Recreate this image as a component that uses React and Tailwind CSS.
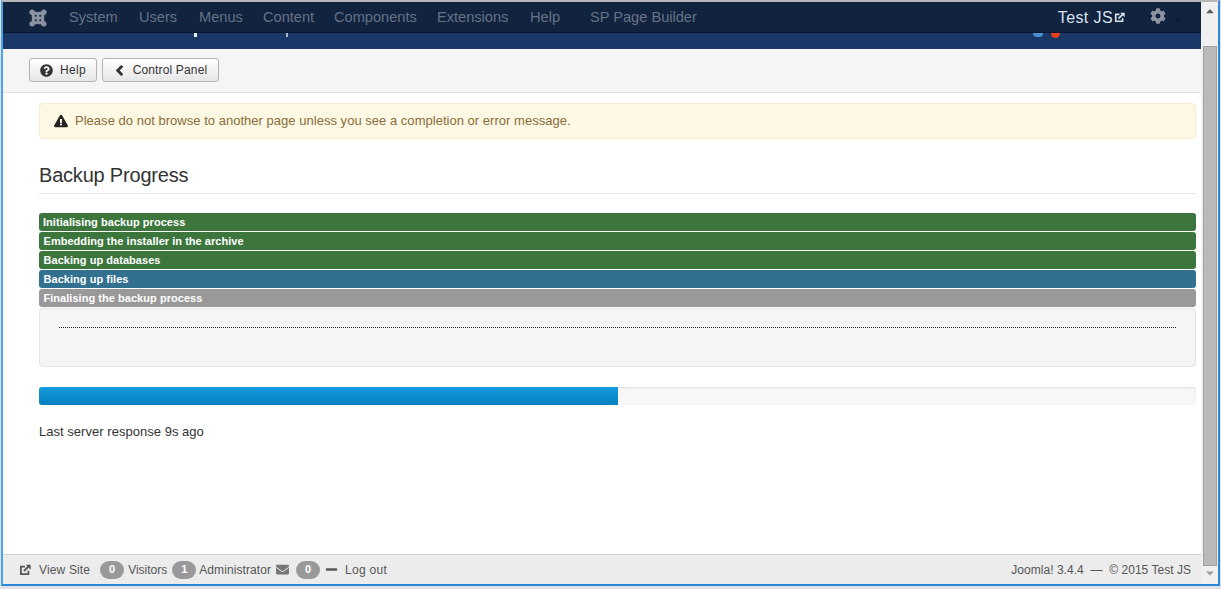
import React from "react";
import { FaQuestionCircle, FaChevronLeft, FaExclamationTriangle, FaCog, FaEnvelope, FaMinus, FaCaretUp, FaCaretDown } from "react-icons/fa";

function Ext({ className }) {
  return (
    <svg viewBox="0 0 16 16" className={className} fill="none" stroke="currentColor">
      <path d="M12.5 9v4.5h-10v-10H8" strokeWidth="2.4" />
      <path d="M6.5 9.5L14 2" strokeWidth="2.6" />
      <path d="M9 1h6.5v6.5z" fill="currentColor" stroke="none" />
    </svg>
  );
}

function JoomlaMark({ className }) {
  return (
    <svg viewBox="0 0 20 20" className={className}>
      <g fill="#8b93a0">
        <rect x="3" y="3" width="14" height="14" />
        <circle cx="3.5" cy="3.5" r="3" />
        <circle cx="16.5" cy="3.5" r="3" />
        <circle cx="3.5" cy="16.5" r="3" />
        <circle cx="16.5" cy="16.5" r="3" />
      </g>
      <g fill="#11233f">
        <path d="M7 0h6l-3 3.5zM7 20h6l-3-3.500zM0 7v6l3.500-3zM20 7v6l-3.500-3z" />
        <circle cx="7.500" cy="7.500" r="1.100" />
        <circle cx="12.500" cy="7.500" r="1.100" />
        <circle cx="7.500" cy="12.500" r="1.100" />
        <circle cx="12.500" cy="12.500" r="1.100" />
      </g>
    </svg>
  );
}

const menu = [
  ["System", "w-[70px]"],
  ["Users", "w-[60px]"],
  ["Menus", "w-[64px]"],
  ["Content", "w-[71px]"],
  ["Components", "w-[103px]"],
  ["Extensions", "w-[93px]"],
  ["Help", "w-[60px]"],
  ["SP Page Builder", "w-[120px]"],
];

const steps = [
  ["Initialising backup process", "bg-[#3c763d]", "pl-1"],
  ["Embedding the installer in the archive", "bg-[#3c763d]", "pl-[4.5px]"],
  ["Backing up databases", "bg-[#3c763d]", "pl-[4.5px]"],
  ["Backing up files", "bg-[#31708f]", "pl-[4.5px]"],
  ["Finalising the backup process", "bg-[#999999]", "pl-[4.5px]"],
];

function Badge({ n }) {
  return (
    <span className="inline-flex h-[18px] w-6 items-center justify-center rounded-full bg-[#999999] text-[11px] font-bold text-white">
      {n}
    </span>
  );
}

export default function App() {
  return (
    <div className="h-[589px] w-[1221px] overflow-hidden bg-[#dfe1e4] pl-px font-['Liberation_Sans',Arial,sans-serif]">
      <div className="flex h-[586px] w-[1219px] border-t-2 border-r-2 border-b-2 border-l-2 border-t-[#b8b8b8] border-r-[#2b88d8] border-b-[#2b88d8] border-l-[#4ba3e8] bg-white">
        <div className="flex min-w-0 flex-1 flex-col">
          <nav className="flex h-[31px] shrink-0 items-center border-b border-[#0a1730] bg-[#11233f] pt-px text-[14.6px] text-[#667285]">
            <JoomlaMark className="ml-[26px] h-[18px] w-[18px]" />
            <div className="ml-[22px] flex">
              {menu.map(([t, w]) => (
                <span key={t} className={w}>{t}</span>
              ))}
            </div>
            <div className="ml-auto flex items-center text-[16px] tracking-[0.4px] text-[#d9e2ee]">
              <span>Test JS</span>
              <Ext className="ml-[1px] h-[11px] w-[11px]" />
            </div>
            <FaCog className="ml-[25px] -mt-[3px] h-[16px] w-[16px] text-[#8b93a0]" />
            <FaCaretDown className="ml-[7px] mt-1 h-[10px] w-[10px] text-[#0a1730]" />
            <span className="w-[18px]" />
          </nav>
          <div className="relative h-[16px] shrink-0 bg-[#1a3867]">
            <span className="absolute left-[191px] top-0 h-[4px] w-[3px] bg-[#e6eef7]" />
            <span className="absolute left-[283px] top-0 h-[4px] w-[2px] bg-[#a8b4c4]" />
            <span className="absolute left-[1030px] top-0 h-[4px] w-[10px] rounded-b-full bg-[#4a90d9]" />
            <span className="absolute left-[1048px] top-0 h-[5px] w-[9px] rounded-b-full bg-[#e8401c]" />
          </div>
          <div className="flex h-[44px] shrink-0 items-center gap-[5px] border-b border-[#e3e3e3] bg-[#f5f5f5] pb-[2px] pl-[26px] text-xs text-[#333333]">
            <button className="flex h-6 w-[68px] items-center justify-center gap-[7px] rounded-[3px] border border-[#b3b3b3] bg-gradient-to-b from-white to-[#e6e6e6] pt-px tracking-[0.3px]">
              <FaQuestionCircle className="h-[13px] w-[13px]" />
              Help
            </button>
            <button className="flex h-6 w-[117px] items-center justify-center gap-[8px] rounded-[3px] border border-[#b3b3b3] bg-gradient-to-b from-white to-[#e6e6e6] pt-px tracking-[0.15px]">
              <FaChevronLeft className="h-[11px] w-[11px]" stroke="currentColor" strokeWidth="50" />
              Control Panel
            </button>
          </div>
          <main className="flex-1 pt-[10px] pl-9 pr-[5px]">
            <div className="flex h-[36px] items-center rounded border border-[#faebcc] bg-[#fcf8e3] pl-[14px] text-[13px] tracking-[0.025px] text-[#8a6d3b]">
              <FaExclamationTriangle className="mr-[7px] h-[14px] w-[14px] text-[#222222]" />
              Please do not browse to another page unless you see a completion or error message.
            </div>
            <h1 className="mt-[24px] h-[31px] border-b border-[#e5e5e5] text-xl leading-[24px] font-normal tracking-[-0.2px] text-[#333333]">Backup Progress</h1>
            <div className="mt-[19px] flex flex-col gap-px">
              {steps.map(([t, c, p]) => (
                <div key={t} className={`h-[18px] rounded-[3px] ${c} ${p} text-[11px] leading-[18px] font-bold tracking-[0.04px] text-white`}>{t}</div>
              ))}
            </div>
            <div className="mt-px h-[59px] rounded border border-[#e3e3e3] bg-[#f5f5f5] px-[19px] pt-[18px]">
              <div className="border-t border-dotted border-[#222222]" />
            </div>
            <div className="mt-[20px] h-[18px] overflow-hidden rounded-[3px] bg-[#f7f7f7] shadow-[inset_0_1px_2px_rgba(0,0,0,0.1)]">
              <div className="h-full w-1/2 bg-gradient-to-b from-[#149bdf] to-[#0480be]" />
            </div>
            <p className="mt-[17px] text-[13px] tracking-[0.03px] text-[#333333]">Last server response 9s ago</p>
          </main>
          <footer className="flex h-[30px] shrink-0 items-center border-t border-[#d4d4d4] bg-[#ececec] pr-[10px] pl-[16px] text-xs text-[#555555]">
            <Ext className="h-[12px] w-[12px]" />
            <span className="ml-2 tracking-[0.15px]">View Site</span>
            <span className="ml-[10px]"><Badge n="0" /></span>
            <span className="ml-[4px]">Visitors</span>
            <span className="ml-[5px]"><Badge n="1" /></span>
            <span className="ml-[3px] tracking-[0.08px]">Administrator</span>
            <FaEnvelope className="ml-[5px] h-[13px] w-[13px] text-[#777777]" />
            <span className="ml-[7px]"><Badge n="0" /></span>
            <FaMinus className="ml-[5px] h-[13px] w-[13px]" />
            <span className="ml-[7px] tracking-[0.3px]">Log out</span>
            <span className="ml-auto tracking-[0.03px]">Joomla! 3.4.4&nbsp; — &nbsp;© 2015 Test JS</span>
          </footer>
        </div>
        <div className="flex w-[17px] shrink-0 flex-col items-center bg-[#f0f0f0]">
          <FaCaretUp className="mt-[3px] h-3 w-3 text-[#5c5c5c]" />
          <div className="mt-[29px] h-[520px] w-[14px] border border-[#a0a0a0] bg-[#bababa]" />
          <FaCaretDown className="mt-[1px] h-3 w-3 text-[#a0a0a0]" />
        </div>
      </div>
    </div>
  );
}
